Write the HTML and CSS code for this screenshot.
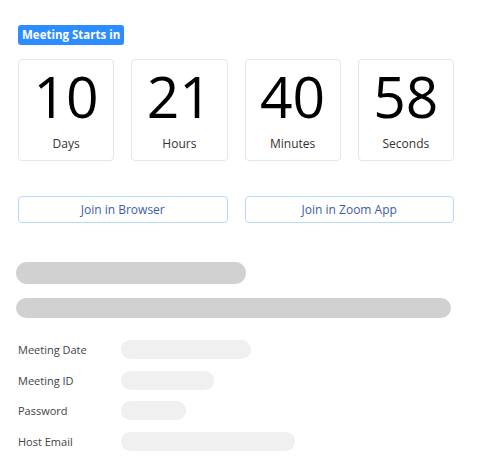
FILE: index.html
```html
<!DOCTYPE html>
<html lang="en">
<head>
  <meta charset="UTF-8" />
  <meta name="viewport" content="width=device-width, initial-scale=1.0"/>
  <title>Meeting Starts in</title>
  <link rel="stylesheet" href="styles.css">
</head>
<body>
  <div class="page">
    <!-- Countdown -->
    <div class="badge">Meeting Starts in</div>

    <div class="countdown">
      <div class="unit">
        <div class="num">10</div>
        <div class="label">Days</div>
      </div>
      <div class="unit">
        <div class="num">21</div>
        <div class="label">Hours</div>
      </div>
      <div class="unit">
        <div class="num">40</div>
        <div class="label">Minutes</div>
      </div>
      <div class="unit">
        <div class="num">58</div>
        <div class="label">Seconds</div>
      </div>
    </div>

    <div class="actions">
      <button class="join">Join in Browser</button>
      <button class="join">Join in Zoom App</button>
    </div>

    <!-- Loading placeholders -->
    <div class="skeleton">
      <div class="bar bar-title"></div>
      <div class="bar bar-sub"></div>
    </div>

    <div class="details">
      <div class="row">
        <span class="key">Meeting Date</span>
        <span class="pill" style="width: 130px"></span>
      </div>
      <div class="row">
        <span class="key">Meeting ID</span>
        <span class="pill" style="width: 93px"></span>
      </div>
      <div class="row">
        <span class="key">Password</span>
        <span class="pill" style="width: 65px"></span>
      </div>
      <div class="row">
        <span class="key">Host Email</span>
        <span class="pill" style="width: 174px"></span>
      </div>
    </div>
  </div>
</body>
</html>
```

FILE: styles.css
```css
/* Reset */
* {
  margin: 0;
  padding: 0;
  box-sizing: border-box;
}

html, body {
  background: #fff;
  font-family: 'Open Sans', 'Noto Sans', sans-serif;
  color: #333;
}

.page {
  width: 454px;
  padding: 25px 0 0 18px;
}

.badge {
  width: fit-content;
  height: 20px;
  line-height: 20px;
  padding: 0 4px;
  background: #2d8cff;
  color: #fff;
  font-size: 11.5px;
  font-weight: 700;
  border-radius: 3px;
}

.countdown {
  display: grid;
  grid-template-columns: repeat(4, 1fr);
  column-gap: 17px;
  margin-top: 14px;
}

.unit {
  height: 102px;
  border: 1px solid #e6e6e6;
  border-radius: 4px;
  text-align: center;
}

.num {
  font-size: 57px;
  line-height: 1;
  color: #000;
  margin-top: 8px;
}

.label {
  font-size: 12px;
  color: #333;
  margin-top: 10px;
}

.actions {
  display: grid;
  grid-template-columns: 1fr 1fr;
  column-gap: 17px;
  margin-top: 35px;
}

.join {
  height: 27px;
  background: #fff;
  border: 1px solid #b8d8ff;
  border-radius: 4px;
  color: #3d5cb0;
  font-family: inherit;
  font-size: 12px;
  cursor: pointer;
}

.skeleton {
  margin: 39px 0 0 -2px;
}

.bar {
  background: #d1d1d1;
  border-radius: 11px;
}

.bar-title {
  width: 230px;
  height: 22px;
}

.bar-sub {
  width: 435px;
  height: 20px;
  margin-top: 14px;
}

.details {
  display: flex;
  flex-direction: column;
  gap: 11.7px;
  margin-top: 22px;
}

.row {
  display: flex;
  align-items: center;
  height: 19px;
}

.key {
  width: 103px;
  font-size: 11px;
  color: #444;
}

.pill {
  height: 19px;
  background: #f0f0f0;
  border-radius: 10px;
}
```
